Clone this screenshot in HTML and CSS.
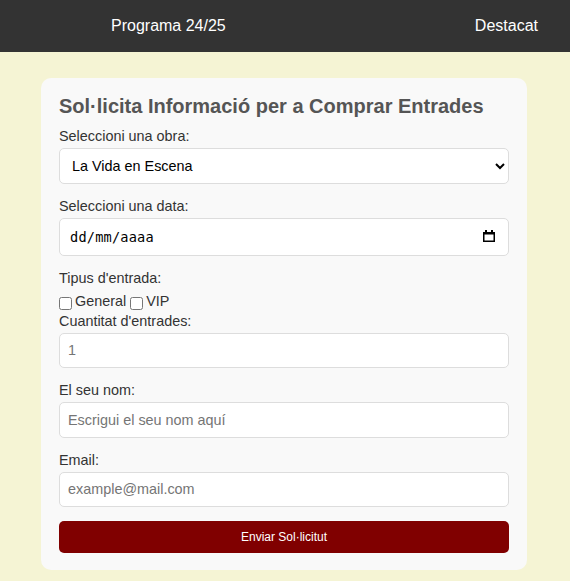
FILE: index.html
```html
<!DOCTYPE html>
<html lang="ca">
<head>
<meta charset="utf-8">
<title>Sol·licita Informació</title>
<link rel="stylesheet" href="styles.css">
</head>
<body>
<header class="topbar">
  <nav class="nav">
    <a class="nav-link" href="#">Programa 24/25</a>
    <a class="nav-link" href="#">Destacat</a>
  </nav>
</header>
<main class="page">
  <form class="card">
    <h2 class="card-title">Sol·licita Informació per a Comprar Entrades</h2>

    <label class="field-label" for="obra">Seleccioni una obra:</label>
    <select class="field" id="obra">
      <option>La Vida en Escena</option>
    </select>

    <label class="field-label" for="data">Seleccioni una data:</label>
    <div class="date-wrap">
      <input class="field field-date" type="text" id="data" placeholder="dd/mm/aaaa">
      <svg class="date-icon" width="12" height="12" viewBox="0 0 12 12" aria-hidden="true">
        <rect x="2" y="0" width="2" height="2" fill="#000"/>
        <rect x="8" y="0" width="2" height="2" fill="#000"/>
        <rect x="0.5" y="2" width="11" height="2.5" fill="#000"/>
        <rect x="0.75" y="2.75" width="10.5" height="8.5" fill="none" stroke="#000" stroke-width="1.5"/>
      </svg>
    </div>

    <label class="field-label">Tipus d'entrada:</label>
    <div class="check-row">
      <input class="check" type="checkbox" id="general"><label class="check-label" for="general">General</label>
      <input class="check" type="checkbox" id="vip"><label class="check-label" for="vip">VIP</label>
    </div>

    <label class="field-label" for="quant">Cuantitat d'entrades:</label>
    <input class="field" type="number" id="quant" placeholder="1">

    <label class="field-label" for="nom">El seu nom:</label>
    <input class="field" type="text" id="nom" placeholder="Escrigui el seu nom aquí">

    <label class="field-label" for="email">Email:</label>
    <input class="field" type="email" id="email" placeholder="example@mail.com">

    <button class="submit" type="button">Enviar Sol·licitut</button>
  </form>
</main>
</body>
</html>
```
FILE: styles.css
```css
html, body {
  margin: 0;
  padding: 0;
}
body {
  background: #f5f4d4;
  font-family: "Liberation Sans", Arial, sans-serif;
  color: #333;
  height: 581px;
  overflow: hidden;
}
.topbar {
  background: #333333;
  height: 52px;
}
.nav {
  height: 100%;
  display: flex;
  align-items: center;
  justify-content: space-between;
  padding: 0 32px 0 111px;
}
.nav-link {
  color: #ffffff;
  text-decoration: none;
  font-size: 16px;
}
.page {
  padding-top: 26px;
}
.card {
  width: 450px;
  margin: 0 auto;
  padding: 17px 18px 17px;
  background: #f9f9f9;
  border-radius: 10px;
  display: flex;
  flex-direction: column;
  position: relative;
  left: -1px;
}
.card-title {
  margin: 0 0 10px;
  font-size: 20px;
  font-weight: bold;
  color: #555555;
}
.field-label {
  display: block;
  font-size: 14.4px;
  color: #333;
  margin-bottom: 4px;
}
.field {
  box-sizing: border-box;
  width: 100%;
  height: 35.5px;
  padding: 8px;
  font-family: "Liberation Sans", Arial, sans-serif;
  font-size: 14.4px;
  color: #000;
  background: #fff;
  border: 1px solid #dddddd;
  border-radius: 5px;
  margin: 0 0 14px;
}
.field::placeholder {
  color: #757575;
}
.date-wrap {
  position: relative;
}
.field-date {
  height: 38px;
  padding-left: 10px;
  font-family: "DejaVu Sans Mono", monospace;
  font-size: 13.6px;
  letter-spacing: 0.2px;
}
.field-date::placeholder {
  color: #000;
}
.date-icon {
  position: absolute;
  left: 424px;
  top: 12px;
}
.check-row {
  display: flex;
  align-items: center;
  font-size: 14.4px;
  height: 23px;
}
.check {
  width: 13px;
  height: 13px;
  margin: 4px 3px 0 0;
}
.check-label {
  margin-right: 4px;
}
.submit {
  height: 32px;
  background: #800000;
  color: #fff;
  border: none;
  border-radius: 5px;
  font-family: "Liberation Sans", Arial, sans-serif;
  font-size: 12px;
}
```
